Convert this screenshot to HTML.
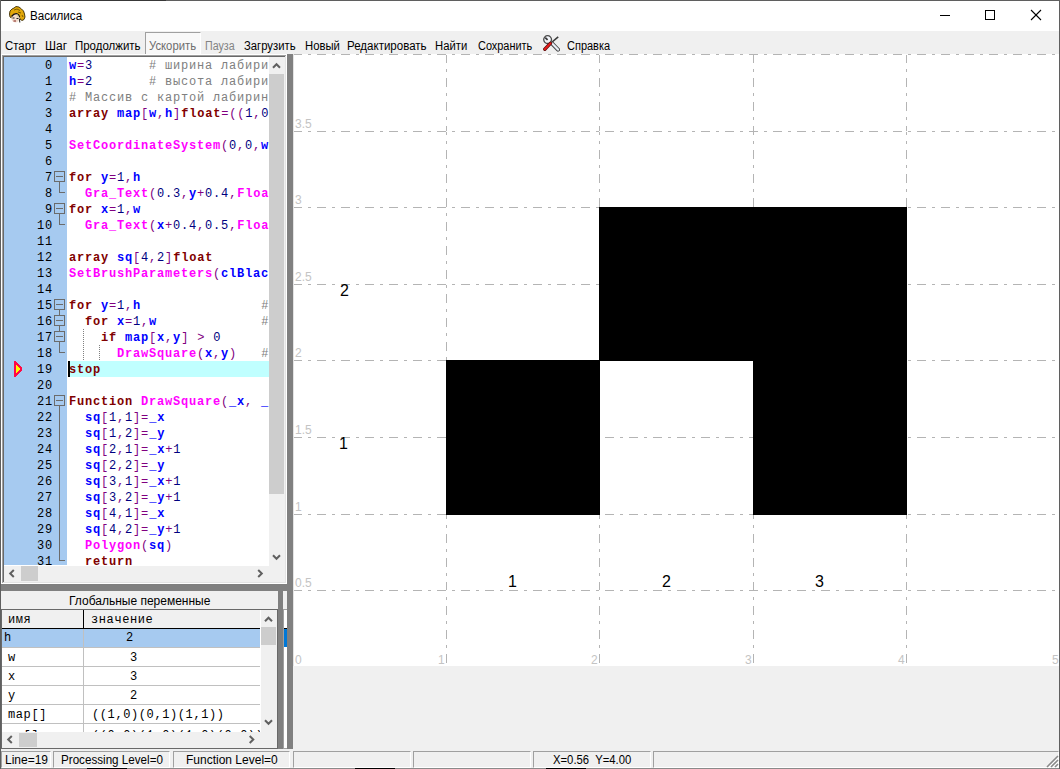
<!DOCTYPE html>
<html><head><meta charset="utf-8">
<style>
*{margin:0;padding:0;box-sizing:border-box}
html,body{width:1060px;height:769px;overflow:hidden;background:#f0f0f0;position:relative;font-family:"Liberation Sans",sans-serif;font-size:12px;color:#000}
.a{position:absolute}
.ui{position:absolute;white-space:pre;font-family:"Liberation Sans",sans-serif;font-size:12px;line-height:16px}
.cl{position:absolute;left:69px;height:16px;line-height:16px;white-space:pre;font-family:"Liberation Mono",monospace;font-size:12px;letter-spacing:0.8px;color:#000;}
.hl{position:absolute;left:69px;width:200px;height:16px;background:#c0ffff}
.ln{position:absolute;left:4px;width:49px;text-align:right;height:16px;line-height:16px;font-family:"Liberation Mono",monospace;font-size:12px;letter-spacing:0.8px;color:#000}
.k{color:#800000;font-weight:bold}
.i{color:#0000ff;font-weight:bold}
.o{color:#800080}
.n{color:#000080}
.c{color:#808080}
.f{color:#ff00ff;font-weight:bold}
.gt{position:absolute;white-space:pre;font-family:"Liberation Mono",monospace;font-size:12px;letter-spacing:0.6px;line-height:18px;color:#000}
.ax{position:absolute;white-space:pre;font-family:"Liberation Sans",sans-serif;font-size:12px;line-height:14px;color:#c4c4c4}
.bl{position:absolute;white-space:pre;font-family:"Liberation Sans",sans-serif;font-size:16px;line-height:18px;color:#000}
.sp{position:absolute;top:751px;height:17px;border-top:1px solid #a0a0a0;border-left:1px solid #a0a0a0;border-right:1px solid #fff;border-bottom:1px solid #fff}
</style></head><body>
<!-- window frame -->
<div style="position:absolute;left:0px;top:0px;width:1060px;height:1px;background:#5f5f5f"></div>
<div style="position:absolute;left:0px;top:0px;width:1px;height:769px;background:#5f5f5f"></div>
<div style="position:absolute;left:1059px;top:0px;width:1px;height:769px;background:#5f5f5f"></div>
<div style="position:absolute;left:0px;top:768px;width:1060px;height:1px;background:#8a8a8a"></div>
<!-- title bar -->
<div style="position:absolute;left:1px;top:1px;width:1058px;height:30px;background:#ffffff"></div>
<svg class="a" style="left:0;top:0" width="30" height="30">
 <path d="M9.5 14 L10 11 L12 9 L14 8 L16 6.5 L19 7 L21.5 9 L23.5 11 L24.5 14 L25 17 L24 19.5 L22 20.5 L20 19 L19 16 L16 14.5 L13 15.5 L11.5 18 L10 17 Z" fill="#e2a80a" stroke="#3a2a00" stroke-width="0.9"/>
 <path d="M14 10 L17 9 L20 10.5 M18 12 L21 13 M22 15 L23 17" stroke="#7a5a00" stroke-width="1" fill="none"/>
 <path d="M11.5 17 Q12 14 15.5 13.5 Q19 14 19.5 17.5 Q19.5 21.5 16 22.5 Q12.5 22.5 11.5 19.5 Z" fill="#f2dccc"/>
 <path d="M11.5 16.5 Q14 13.2 17 13.8 Q19 14.5 19.6 17" stroke="#151010" stroke-width="1.3" fill="none"/>
 <path d="M17 14.5 L18.5 17.5" stroke="#d8d0a0" stroke-width="1.5"/>
 <rect x="12.5" y="17.5" width="2" height="1" fill="#222"/>
 <rect x="16.5" y="18" width="2" height="1" fill="#222"/>
 <rect x="13.5" y="20.5" width="2.5" height="1" fill="#802020"/>
 <path d="M19.5 19 L19.8 22.5" stroke="#202020" stroke-width="1"/>
</svg>
<div class="ui" style="left:30px;top:8px;font-size:12px;transform:scaleX(0.97);transform-origin:0 0">Василиса</div>
<svg class="a" style="left:930px;top:0" width="130" height="31">
 <line x1="10" y1="15.5" x2="20" y2="15.5" stroke="#000" stroke-width="1"/>
 <rect x="55.5" y="10.5" width="9" height="9" fill="none" stroke="#000" stroke-width="1"/>
 <line x1="101" y1="10" x2="111" y2="20" stroke="#000" stroke-width="1.1"/>
 <line x1="111" y1="10" x2="101" y2="20" stroke="#000" stroke-width="1.1"/>
</svg>
<!-- menu bar -->
<div style="position:absolute;left:1px;top:31px;width:1058px;height:23px;background:#f0f0f0"></div>
<div class="a" style="left:145px;top:32px;width:56px;height:22px;border-top:1px solid #a0a0a0;border-left:1px solid #a0a0a0;border-right:1px solid #fff;background:#f8f8f8"></div>
<div class="ui" style="left:5px;top:38px;transform:scaleX(0.95);transform-origin:0 0">Старт</div>
<div class="ui" style="left:45px;top:38px;transform:scaleX(1.0);transform-origin:0 0">Шаг</div>
<div class="ui" style="left:75px;top:38px;transform:scaleX(0.955);transform-origin:0 0">Продолжить</div>
<div class="ui" style="left:149px;top:38px;color:#6d6d6d;transform:scaleX(0.94);transform-origin:0 0">Ускорить</div>
<div class="ui" style="left:205px;top:38px;color:#838383;transform:scaleX(0.89);transform-origin:0 0">Пауза</div>
<div class="ui" style="left:244px;top:38px;transform:scaleX(0.94);transform-origin:0 0">Загрузить</div>
<div class="ui" style="left:305px;top:38px;transform:scaleX(0.94);transform-origin:0 0">Новый</div>
<div class="ui" style="left:347px;top:38px;transform:scaleX(0.96);transform-origin:0 0">Редактировать</div>
<div class="ui" style="left:435px;top:38px;transform:scaleX(0.94);transform-origin:0 0">Найти</div>
<div class="ui" style="left:478px;top:38px;transform:scaleX(0.91);transform-origin:0 0">Сохранить</div>
<svg class="a" style="left:543px;top:35px" width="17" height="17" viewBox="0 0 17 17">
 <path d="M8.5 7.5 L15.2 1.8" stroke="#3a3a3a" stroke-width="1.6"/>
 <path d="M9.2 8.6 L15 14.6" stroke="#4a4a4a" stroke-width="4.2" stroke-linecap="round"/>
 <path d="M9.2 8.6 L15 14.6" stroke="#e9eef7" stroke-width="2.2" stroke-linecap="round"/>
 <circle cx="4.6" cy="4.6" r="3.9" fill="#f3f5fa" stroke="#4a4a4a" stroke-width="1.3"/>
 <path d="M2.2 2.6 L4.6 4.8" stroke="#3a3a3a" stroke-width="1.8"/>
 <path d="M7.4 8.4 L1.8 14.2" stroke="#5a1010" stroke-width="3.4" stroke-linecap="round"/>
 <path d="M7.4 8.4 L1.8 14.2" stroke="#e41b1b" stroke-width="2" stroke-linecap="round"/>
</svg>
<div class="ui" style="left:567px;top:38px;transform:scaleX(0.915);transform-origin:0 0">Справка</div>

<!-- graph -->
<div style="position:absolute;left:293px;top:54px;width:766px;height:612px;background:#ffffff"></div>
<svg class="a" style="left:0;top:0" width="1060" height="769">
<g shape-rendering="crispEdges">
<line x1="446.5" y1="54" x2="446.5" y2="666" stroke="#b4b4b4" stroke-dasharray="9 6 3 6"/><line x1="599.5" y1="54" x2="599.5" y2="666" stroke="#b4b4b4" stroke-dasharray="9 6 3 6"/><line x1="753.5" y1="54" x2="753.5" y2="666" stroke="#b4b4b4" stroke-dasharray="9 6 3 6"/><line x1="906.5" y1="54" x2="906.5" y2="666" stroke="#b4b4b4" stroke-dasharray="9 6 3 6"/><line x1="1059.5" y1="54" x2="1059.5" y2="666" stroke="#b4b4b4" stroke-dasharray="9 6 3 6"/><line x1="293" y1="54.5" x2="1060" y2="54.5" stroke="#fff"/><line x1="293" y1="54.5" x2="1060" y2="54.5" stroke="#b4b4b4" stroke-dasharray="9 6 3 6"/><line x1="293" y1="131.5" x2="1060" y2="131.5" stroke="#fff"/><line x1="293" y1="131.5" x2="1060" y2="131.5" stroke="#b4b4b4" stroke-dasharray="9 6 3 6"/><line x1="293" y1="207.5" x2="1060" y2="207.5" stroke="#fff"/><line x1="293" y1="207.5" x2="1060" y2="207.5" stroke="#b4b4b4" stroke-dasharray="9 6 3 6"/><line x1="293" y1="284.5" x2="1060" y2="284.5" stroke="#fff"/><line x1="293" y1="284.5" x2="1060" y2="284.5" stroke="#b4b4b4" stroke-dasharray="9 6 3 6"/><line x1="293" y1="360.5" x2="1060" y2="360.5" stroke="#fff"/><line x1="293" y1="360.5" x2="1060" y2="360.5" stroke="#b4b4b4" stroke-dasharray="9 6 3 6"/><line x1="293" y1="437.5" x2="1060" y2="437.5" stroke="#fff"/><line x1="293" y1="437.5" x2="1060" y2="437.5" stroke="#b4b4b4" stroke-dasharray="9 6 3 6"/><line x1="293" y1="514.5" x2="1060" y2="514.5" stroke="#fff"/><line x1="293" y1="514.5" x2="1060" y2="514.5" stroke="#b4b4b4" stroke-dasharray="9 6 3 6"/><line x1="293" y1="590.5" x2="1060" y2="590.5" stroke="#fff"/><line x1="293" y1="590.5" x2="1060" y2="590.5" stroke="#b4b4b4" stroke-dasharray="9 6 3 6"/>
</g>
</svg>
<div style="position:absolute;left:446px;top:360px;width:154px;height:155px;background:#000"></div>
<div style="position:absolute;left:599px;top:207px;width:308px;height:154px;background:#000"></div>
<div style="position:absolute;left:753px;top:360px;width:154px;height:155px;background:#000"></div>
<div style="position:absolute;left:293px;top:666px;width:766px;height:102px;background:#f0f0f0"></div>
<div class="ax" style="left:295px;top:117px">3.5</div>
<div class="ax" style="left:295px;top:193px">3</div>
<div class="ax" style="left:295px;top:270px">2.5</div>
<div class="ax" style="left:295px;top:346px">2</div>
<div class="ax" style="left:295px;top:423px">1.5</div>
<div class="ax" style="left:295px;top:500px">1</div>
<div class="ax" style="left:295px;top:576px">0.5</div>
<div class="ax" style="left:295px;top:653px">0</div>
<div class="ax" style="left:438px;top:653px">1</div>
<div class="ax" style="left:591px;top:653px">2</div>
<div class="ax" style="left:745px;top:653px">3</div>
<div class="ax" style="left:898px;top:653px">4</div>
<div class="ax" style="left:1052px;top:653px">5</div>
<div class="bl" style="left:340px;top:282px">2</div>
<div class="bl" style="left:339px;top:435px">1</div>
<div class="bl" style="left:508px;top:573px">1</div>
<div class="bl" style="left:662px;top:573px">2</div>
<div class="bl" style="left:815px;top:573px">3</div>

<!-- splitters -->
<div style="position:absolute;left:287px;top:54px;width:6px;height:695px;background:#808080"></div>
<div style="position:absolute;left:293px;top:54px;width:1px;height:612px;background:#e3e3e3"></div>
<div style="position:absolute;left:1px;top:584px;width:292px;height:7px;background:#808080"></div>

<!-- editor frame -->
<div style="position:absolute;left:1px;top:54px;width:286px;height:530px;background:#ffffff"></div>
<div style="position:absolute;left:2px;top:55px;width:284px;height:528px;background:#a0a0a0"></div>
<div style="position:absolute;left:3px;top:56px;width:283px;height:527px;background:#696969"></div>
<div style="position:absolute;left:4px;top:57px;width:282px;height:526px;background:#f0f0f0"></div>
<div style="position:absolute;left:286px;top:55px;width:1px;height:529px;background:#ffffff"></div>
<div style="position:absolute;left:2px;top:583px;width:285px;height:1px;background:#ffffff"></div>
<div style="position:absolute;left:285px;top:56px;width:1px;height:527px;background:#e3e3e3"></div>
<div style="position:absolute;left:3px;top:582px;width:283px;height:1px;background:#e3e3e3"></div>
<div style="position:absolute;left:4px;top:57px;width:265px;height:509px;background:#ffffff"></div>
<div style="position:absolute;left:4px;top:57px;width:63px;height:508px;background:#a6caf0"></div>
<div class="a" style="left:0;top:0;width:269px;height:565px;overflow:hidden">
<div class="ln" style="top:58px">0</div>
<div class="ln" style="top:74px">1</div>
<div class="ln" style="top:90px">2</div>
<div class="ln" style="top:106px">3</div>
<div class="ln" style="top:122px">4</div>
<div class="ln" style="top:138px">5</div>
<div class="ln" style="top:154px">6</div>
<div class="ln" style="top:170px">7</div>
<div class="ln" style="top:186px">8</div>
<div class="ln" style="top:202px">9</div>
<div class="ln" style="top:218px">10</div>
<div class="ln" style="top:234px">11</div>
<div class="ln" style="top:250px">12</div>
<div class="ln" style="top:266px">13</div>
<div class="ln" style="top:282px">14</div>
<div class="ln" style="top:298px">15</div>
<div class="ln" style="top:314px">16</div>
<div class="ln" style="top:330px">17</div>
<div class="ln" style="top:346px">18</div>
<div class="ln" style="top:362px">19</div>
<div class="ln" style="top:378px">20</div>
<div class="ln" style="top:394px">21</div>
<div class="ln" style="top:410px">22</div>
<div class="ln" style="top:426px">23</div>
<div class="ln" style="top:442px">24</div>
<div class="ln" style="top:458px">25</div>
<div class="ln" style="top:474px">26</div>
<div class="ln" style="top:490px">27</div>
<div class="ln" style="top:506px">28</div>
<div class="ln" style="top:522px">29</div>
<div class="ln" style="top:538px">30</div>
<div class="ln" style="top:554px">31</div>
<svg class="a" style="left:0;top:57px" width="70" height="510">
<g shape-rendering="crispEdges"><rect x="54.5" y="114.5" width="10" height="10" fill="none" stroke="#6b6b6b"/><line x1="56" y1="119.5" x2="63" y2="119.5" stroke="#6b6b6b"/><line x1="59.5" y1="125" x2="59.5" y2="136" stroke="#6b6b6b"/><line x1="65" y1="135.5" x2="59.5" y2="135.5" stroke="#6b6b6b"/><rect x="54.5" y="146.5" width="10" height="10" fill="none" stroke="#6b6b6b"/><line x1="56" y1="151.5" x2="63" y2="151.5" stroke="#6b6b6b"/><line x1="59.5" y1="157" x2="59.5" y2="168" stroke="#6b6b6b"/><line x1="65" y1="167.5" x2="59.5" y2="167.5" stroke="#6b6b6b"/><rect x="54.5" y="242.5" width="10" height="10" fill="none" stroke="#6b6b6b"/><line x1="56" y1="247.5" x2="63" y2="247.5" stroke="#6b6b6b"/><rect x="54.5" y="258.5" width="10" height="10" fill="none" stroke="#6b6b6b"/><line x1="56" y1="263.5" x2="63" y2="263.5" stroke="#6b6b6b"/><rect x="54.5" y="274.5" width="10" height="10" fill="none" stroke="#6b6b6b"/><line x1="56" y1="279.5" x2="63" y2="279.5" stroke="#6b6b6b"/><line x1="59.5" y1="253" x2="59.5" y2="258" stroke="#6b6b6b"/><line x1="59.5" y1="269" x2="59.5" y2="274" stroke="#6b6b6b"/><line x1="59.5" y1="285" x2="59.5" y2="296" stroke="#6b6b6b"/><line x1="65" y1="295.5" x2="59.5" y2="295.5" stroke="#6b6b6b"/><rect x="54.5" y="338.5" width="10" height="10" fill="none" stroke="#6b6b6b"/><line x1="56" y1="343.5" x2="63" y2="343.5" stroke="#6b6b6b"/><line x1="59.5" y1="349" x2="59.5" y2="504" stroke="#6b6b6b"/><line x1="65" y1="503.5" x2="59.5" y2="503.5" stroke="#6b6b6b"/></g>
</svg>
<svg class="a" style="left:0;top:0" width="269" height="566"><g stroke="#808080" stroke-dasharray="1 1" shape-rendering="crispEdges"><line x1="83.5" y1="329" x2="83.5" y2="361"/><line x1="99.5" y1="345" x2="99.5" y2="361"/></g></svg>
<svg class="a" style="left:0;top:0" width="30" height="400"><g shape-rendering="crispEdges"><rect x="14" y="361" width="2" height="1" fill="#ff0a46"/><rect x="14" y="362" width="3" height="1" fill="#ff0a46"/><rect x="14" y="363" width="4" height="1" fill="#ff0a46"/><rect x="14" y="364" width="5" height="1" fill="#ff0a46"/><rect x="14" y="365" width="6" height="1" fill="#ff0a46"/><rect x="14" y="366" width="7" height="1" fill="#ff0a46"/><rect x="14" y="367" width="8" height="1" fill="#ff0a46"/><rect x="14" y="368" width="8" height="1" fill="#ff0a46"/><rect x="14" y="369" width="8" height="1" fill="#ff0a46"/><rect x="14" y="370" width="8" height="1" fill="#ff0a46"/><rect x="14" y="371" width="7" height="1" fill="#ff0a46"/><rect x="14" y="372" width="6" height="1" fill="#ff0a46"/><rect x="14" y="373" width="5" height="1" fill="#ff0a46"/><rect x="14" y="374" width="4" height="1" fill="#ff0a46"/><rect x="14" y="375" width="3" height="1" fill="#ff0a46"/><rect x="14" y="376" width="2" height="1" fill="#ff0a46"/><rect x="16" y="365" width="1" height="1" fill="#ffff00"/><rect x="16" y="366" width="2" height="1" fill="#ffff00"/><rect x="16" y="367" width="3" height="1" fill="#ffff00"/><rect x="16" y="368" width="4" height="1" fill="#ffff00"/><rect x="16" y="369" width="4" height="1" fill="#ffff00"/><rect x="16" y="370" width="3" height="1" fill="#ffff00"/><rect x="16" y="371" width="2" height="1" fill="#ffff00"/><rect x="16" y="372" width="1" height="1" fill="#ffff00"/></g></svg>
<div class="cl" style="top:58px"><span class="i">w</span><span class="o">=</span><span class="n">3</span>       <span class="c"># ширина лабиринта</span></div>
<div class="cl" style="top:74px"><span class="i">h</span><span class="o">=</span><span class="n">2</span>       <span class="c"># высота лабиринта</span></div>
<div class="cl" style="top:90px"><span class="c"># Массив с картой лабиринта</span></div>
<div class="cl" style="top:106px"><span class="k">array</span> <span class="i">map</span><span class="o">[</span><span class="i">w</span><span class="o">,</span><span class="i">h</span><span class="o">]</span><span class="k">float</span><span class="o">=</span><span class="o">((</span><span class="n">1</span><span class="o">,</span><span class="n">0</span><span class="o">)</span></div>
<div class="cl" style="top:122px"></div>
<div class="cl" style="top:138px"><span class="f">SetCoordinateSystem</span><span class="o">(</span><span class="n">0</span><span class="o">,</span><span class="n">0</span><span class="o">,</span><span class="i">w</span><span class="o">,</span></div>
<div class="cl" style="top:154px"></div>
<div class="cl" style="top:170px"><span class="k">for</span> <span class="i">y</span><span class="o">=</span><span class="n">1</span><span class="o">,</span><span class="i">h</span></div>
<div class="cl" style="top:186px">  <span class="f">Gra_Text</span><span class="o">(</span><span class="n">0.3</span><span class="o">,</span><span class="i">y</span><span class="o">+</span><span class="n">0.4</span><span class="o">,</span><span class="f">Float</span></div>
<div class="cl" style="top:202px"><span class="k">for</span> <span class="i">x</span><span class="o">=</span><span class="n">1</span><span class="o">,</span><span class="i">w</span></div>
<div class="cl" style="top:218px">  <span class="f">Gra_Text</span><span class="o">(</span><span class="i">x</span><span class="o">+</span><span class="n">0.4</span><span class="o">,</span><span class="n">0.5</span><span class="o">,</span><span class="f">Float</span></div>
<div class="cl" style="top:234px"></div>
<div class="cl" style="top:250px"><span class="k">array</span> <span class="i">sq</span><span class="o">[</span><span class="n">4</span><span class="o">,</span><span class="n">2</span><span class="o">]</span><span class="k">float</span></div>
<div class="cl" style="top:266px"><span class="f">SetBrushParameters</span><span class="o">(</span><span class="i">clBlack</span></div>
<div class="cl" style="top:282px"></div>
<div class="cl" style="top:298px"><span class="k">for</span> <span class="i">y</span><span class="o">=</span><span class="n">1</span><span class="o">,</span><span class="i">h</span>               <span class="c">#</span></div>
<div class="cl" style="top:314px">  <span class="k">for</span> <span class="i">x</span><span class="o">=</span><span class="n">1</span><span class="o">,</span><span class="i">w</span>             <span class="c">#</span></div>
<div class="cl" style="top:330px">    <span class="k">if</span> <span class="i">map</span><span class="o">[</span><span class="i">x</span><span class="o">,</span><span class="i">y</span><span class="o">]</span> <span class="o">&gt;</span> <span class="n">0</span></div>
<div class="cl" style="top:346px">      <span class="f">DrawSquare</span><span class="o">(</span><span class="i">x</span><span class="o">,</span><span class="i">y</span><span class="o">)</span>   <span class="c">#</span></div>
<div class="hl" style="top:361px"></div>
<div class="cl" style="top:362px"><span class="k">stop</span></div>
<div class="cl" style="top:378px"></div>
<div class="cl" style="top:394px"><span class="k">Function</span> <span class="f">DrawSquare</span><span class="o">(</span><span class="i">_x</span><span class="o">,</span> <span class="i">_y</span></div>
<div class="cl" style="top:410px">  <span class="i">sq</span><span class="o">[</span><span class="n">1</span><span class="o">,</span><span class="n">1</span><span class="o">]</span><span class="o">=</span><span class="i">_x</span></div>
<div class="cl" style="top:426px">  <span class="i">sq</span><span class="o">[</span><span class="n">1</span><span class="o">,</span><span class="n">2</span><span class="o">]</span><span class="o">=</span><span class="i">_y</span></div>
<div class="cl" style="top:442px">  <span class="i">sq</span><span class="o">[</span><span class="n">2</span><span class="o">,</span><span class="n">1</span><span class="o">]</span><span class="o">=</span><span class="i">_x</span><span class="o">+</span><span class="n">1</span></div>
<div class="cl" style="top:458px">  <span class="i">sq</span><span class="o">[</span><span class="n">2</span><span class="o">,</span><span class="n">2</span><span class="o">]</span><span class="o">=</span><span class="i">_y</span></div>
<div class="cl" style="top:474px">  <span class="i">sq</span><span class="o">[</span><span class="n">3</span><span class="o">,</span><span class="n">1</span><span class="o">]</span><span class="o">=</span><span class="i">_x</span><span class="o">+</span><span class="n">1</span></div>
<div class="cl" style="top:490px">  <span class="i">sq</span><span class="o">[</span><span class="n">3</span><span class="o">,</span><span class="n">2</span><span class="o">]</span><span class="o">=</span><span class="i">_y</span><span class="o">+</span><span class="n">1</span></div>
<div class="cl" style="top:506px">  <span class="i">sq</span><span class="o">[</span><span class="n">4</span><span class="o">,</span><span class="n">1</span><span class="o">]</span><span class="o">=</span><span class="i">_x</span></div>
<div class="cl" style="top:522px">  <span class="i">sq</span><span class="o">[</span><span class="n">4</span><span class="o">,</span><span class="n">2</span><span class="o">]</span><span class="o">=</span><span class="i">_y</span><span class="o">+</span><span class="n">1</span></div>
<div class="cl" style="top:538px">  <span class="f">Polygon</span><span class="o">(</span><span class="i">sq</span><span class="o">)</span></div>
<div class="cl" style="top:554px">  <span class="k">return</span></div>
<div class="a" style="left:68px;top:361px;width:2px;height:16px;background:#000"></div>
</div>
<!-- v scrollbar -->
<div style="position:absolute;left:269px;top:57px;width:16px;height:509px;background:#f0f0f0"></div>
<div style="position:absolute;left:269px;top:74px;width:15px;height:420px;background:#cdcdcd"></div>

<!-- h scrollbar -->
<div style="position:absolute;left:4px;top:566px;width:281px;height:16px;background:#f0f0f0"></div>
<div style="position:absolute;left:21px;top:566px;width:17px;height:15px;background:#cdcdcd"></div>


<!-- lower panel -->
<div style="position:absolute;left:1px;top:591px;width:277px;height:158px;background:#f0f0f0"></div>
<div class="ui" style="left:69px;top:593px">Глобальные переменные</div>
<div style="position:absolute;left:1px;top:609px;width:277px;height:1px;background:#696969"></div>
<div style="position:absolute;left:1px;top:609px;width:1px;height:140px;background:#696969"></div>
<div style="position:absolute;left:277px;top:609px;width:1px;height:140px;background:#696969"></div>
<div style="position:absolute;left:2px;top:610px;width:259px;height:122px;background:#ffffff"></div>
<div style="position:absolute;left:2px;top:610px;width:259px;height:18px;background:#f0f0f0"></div>
<div style="position:absolute;left:2px;top:628px;width:259px;height:1px;background:#000"></div>
<div style="position:absolute;left:83px;top:610px;width:1px;height:18px;background:#000"></div>
<div style="position:absolute;left:2px;top:629px;width:259px;height:18px;background:#a6caf0"></div>
<div style="position:absolute;left:2px;top:647px;width:259px;height:1px;background:#c0c0c0"></div>
<div style="position:absolute;left:2px;top:666px;width:259px;height:1px;background:#c0c0c0"></div>
<div style="position:absolute;left:2px;top:685px;width:259px;height:1px;background:#c0c0c0"></div>
<div style="position:absolute;left:2px;top:704px;width:259px;height:1px;background:#c0c0c0"></div>
<div style="position:absolute;left:2px;top:723px;width:259px;height:1px;background:#c0c0c0"></div>
<div style="position:absolute;left:83px;top:629px;width:1px;height:103px;background:#c0c0c0"></div>
<div class="gt" style="left:8px;top:611px">имя</div>
<div class="gt" style="left:91px;top:611px">значение</div>
<div class="gt" style="left:4px;top:629px">h</div>
<div class="gt" style="left:126px;top:629px">2</div>
<div class="gt" style="left:8px;top:649px">w</div>
<div class="gt" style="left:130px;top:649px">3</div>
<div class="gt" style="left:8px;top:668px">x</div>
<div class="gt" style="left:130px;top:668px">3</div>
<div class="gt" style="left:8px;top:687px">y</div>
<div class="gt" style="left:130px;top:687px">2</div>
<div class="gt" style="left:8px;top:706px">map[]</div>
<div class="gt" style="left:92px;top:706px">((1,0)(0,1)(1,1))</div>
<div class="a" style="left:2px;top:724px;width:258px;height:8px;overflow:hidden"><div class="gt" style="left:6px;top:3px">sq[]</div><div class="gt" style="left:90px;top:3px">((0,0)(1,0)(1,0)(0,0))</div></div>
<!-- grid v scrollbar -->
<div style="position:absolute;left:260px;top:610px;width:1px;height:122px;background:#ffffff"></div>
<div style="position:absolute;left:261px;top:610px;width:16px;height:122px;background:#f0f0f0"></div>
<div style="position:absolute;left:261px;top:627px;width:15px;height:18px;background:#cdcdcd"></div>

<div style="position:absolute;left:2px;top:732px;width:275px;height:16px;background:#f0f0f0"></div>
<div style="position:absolute;left:19px;top:733px;width:18px;height:14px;background:#cdcdcd"></div>

<div style="position:absolute;left:1px;top:748px;width:277px;height:1px;background:#696969"></div>
<div style="position:absolute;left:278px;top:591px;width:5px;height:158px;background:#808080"></div>
<div style="position:absolute;left:283px;top:591px;width:4px;height:158px;background:#f0f0f0"></div>
<div style="position:absolute;left:283px;top:609px;width:4px;height:140px;background:#a0a0a0"></div>
<div style="position:absolute;left:284px;top:610px;width:3px;height:138px;background:#ffffff"></div>
<div style="position:absolute;left:284px;top:628px;width:3px;height:1px;background:#000"></div>
<div style="position:absolute;left:284px;top:629px;width:3px;height:18px;background:#0078d7"></div>
<div style="position:absolute;left:1px;top:749px;width:1058px;height:2px;background:#f0f0f0"></div>
<svg class="a" style="left:0;top:0" width="1060" height="769"><polyline points="273.00,67.80 276.50,64.20 280.00,67.80" fill="none" stroke="#606060" stroke-width="2"/><polyline points="273.00,555.20 276.50,558.80 280.00,555.20" fill="none" stroke="#606060" stroke-width="2"/><polyline points="13.80,570.00 10.20,573.50 13.80,577.00" fill="none" stroke="#606060" stroke-width="2"/><polyline points="258.20,570.00 261.80,573.50 258.20,577.00" fill="none" stroke="#606060" stroke-width="2"/><polyline points="265.00,621.30 268.50,617.70 272.00,621.30" fill="none" stroke="#606060" stroke-width="2"/><polyline points="265.00,720.20 268.50,723.80 272.00,720.20" fill="none" stroke="#606060" stroke-width="2"/><polyline points="11.80,736.00 8.20,739.50 11.80,743.00" fill="none" stroke="#606060" stroke-width="2"/><polyline points="249.70,736.00 253.30,739.50 249.70,743.00" fill="none" stroke="#606060" stroke-width="2"/></svg>

<!-- status bar -->
<div style="position:absolute;left:1px;top:749px;width:1058px;height:19px;background:#f0f0f0"></div>
<div class="sp" style="left:1px;width:50px"></div>
<div class="sp" style="left:53px;width:117px"></div>
<div class="sp" style="left:173px;width:117px"></div>
<div class="sp" style="left:293px;width:118px"></div>
<div class="sp" style="left:413px;width:118px"></div>
<div class="sp" style="left:533px;width:118px"></div>
<div class="sp" style="left:653px;width:406px"></div>
<div class="ui" style="left:5px;top:752px">Line=19</div>
<div class="ui" style="left:61px;top:752px;transform:scaleX(0.97);transform-origin:0 0">Processing Level=0</div>
<div class="ui" style="left:186px;top:752px">Function Level=0</div>
<div class="ui" style="left:553px;top:752px;transform:scaleX(0.94);transform-origin:0 0">X=0.56  Y=4.00</div>
<svg class="a" style="left:0;top:0" width="1060" height="769"><g stroke="#fff" stroke-width="1.6"><line x1="1048" y1="768" x2="1059" y2="757"/><line x1="1052" y1="768" x2="1059" y2="761"/><line x1="1056" y1="768" x2="1059" y2="765"/></g><g stroke="#8a8a8a" stroke-width="1.6"><line x1="1047" y1="767" x2="1058" y2="756"/><line x1="1051" y1="767" x2="1058" y2="760"/><line x1="1055" y1="767" x2="1058" y2="764"/></g></svg>
<div style="position:absolute;left:0px;top:768px;width:1060px;height:1px;background:#8a8a8a"></div>
<div style="position:absolute;left:0px;top:0px;width:1060px;height:1px;background:#5f5f5f"></div>
<div style="position:absolute;left:0px;top:0px;width:166px;height:1px;background:#383838"></div>
<div style="position:absolute;left:0px;top:0px;width:1px;height:769px;background:#5f5f5f"></div>
<div style="position:absolute;left:1059px;top:0px;width:1px;height:769px;background:#5f5f5f"></div>
<div style="position:absolute;left:87px;top:768px;width:40px;height:1px;background:#000"></div>
<div style="position:absolute;left:355px;top:768px;width:40px;height:1px;background:#000"></div>
<div style="position:absolute;left:546px;top:768px;width:40px;height:1px;background:#000"></div>
</body></html>
